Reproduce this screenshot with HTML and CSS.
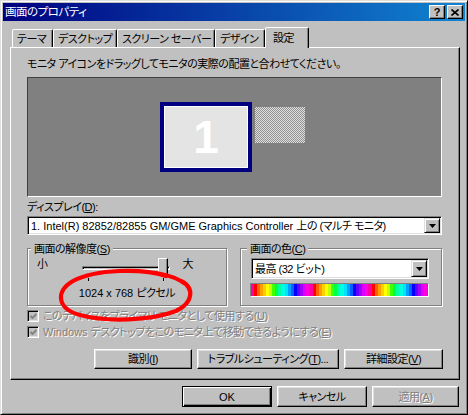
FILE: index.html
```html
<!DOCTYPE html>
<html lang="ja">
<head>
<meta charset="utf-8">
<title>画面のプロパティ</title>
<link rel="stylesheet" href="styles.css">
</head>
<body>
<div class="window">
  <div class="titlebar">
    <span class="title">画面のプロパティ</span>
    <div class="tbtns">
      <span class="tbtn help">?</span>
      <span class="tbtn close"><svg width="8" height="7" viewBox="0 0 8 7"><path d="M0.5 0.5 L7.5 6.5 M7.5 0.5 L0.5 6.5" stroke="#000" stroke-width="1.6" fill="none"/></svg></span>
    </div>
  </div>
  <div class="tabs">
    <span class="tab t1">テーマ</span>
    <span class="tab t2">デスクトップ</span>
    <span class="tab t3">スクリーン セーバー</span>
    <span class="tab t4">デザイン</span>
    <span class="tab t5 active">設定</span>
  </div>
  <div class="panel">
    <p class="desc">モニタ アイコンをドラッグしてモニタの実際の配置と合わせてください。</p>
    <div class="canvas">
      <div class="mon mon1">1</div>
      <div class="mon mon2"></div>
    </div>
    <span class="lbl">ディスプレイ(<u>D</u>):</span>
    <div class="combo wide">
      <span class="val"><span class="en">1. Intel(R) 82852/82855 GM/GME Graphics Controller </span>上の (マルチ モニタ)</span>
      <span class="arrow"><svg width="7" height="4" viewBox="0 0 7 4"><path d="M0 0 H7 L3.5 4 Z" fill="#000"/></svg></span>
    </div>
    <div class="groups">
      <div class="group res">
        <span class="legend">画面の解像度(<u>S</u>)</span>
        <div class="slider-row">
          <span class="small">小</span>
          <div class="slider">
            <span class="track"></span>
            <span class="tick tk1"></span>
            <span class="tick tk2"></span>
            <span class="thumb"></span>
          </div>
          <span class="large">大</span>
        </div>
        <div class="reslabel"><span class="en">1024 x 768 </span>ピクセル</div>
      </div>
      <div class="group color">
        <span class="legend">画面の色(<u>C</u>)</span>
        <div class="combo small-combo">
          <span class="val">最高 (32 ビット)</span>
          <span class="arrow"><svg width="7" height="4" viewBox="0 0 7 4"><path d="M0 0 H7 L3.5 4 Z" fill="#000"/></svg></span>
        </div>
        <div class="colorbar"></div>
      </div>
    </div>
    <div class="check c1">
      <span class="cbox"><svg width="7" height="7" viewBox="0 0 7 7"><path d="M0.5 3 L2.5 5 L6.5 1" stroke="#808080" stroke-width="1.8" fill="none"/></svg></span>
      <span class="dis">このデバイスをプライマリ モニタとして使用する(<u>U</u>)</span>
    </div>
    <div class="check c2">
      <span class="cbox"><svg width="7" height="7" viewBox="0 0 7 7"><path d="M0.5 3 L2.5 5 L6.5 1" stroke="#808080" stroke-width="1.8" fill="none"/></svg></span>
      <span class="dis"><span class="en">Windows </span>デスクトップをこのモニタ上で移動できるようにする(<u>E</u>)</span>
    </div>
    <div class="btnrow">
      <span class="btn b1">識別(<u>I</u>)</span>
      <span class="btn b2">トラブルシューティング(<u>T</u>)...</span>
      <span class="btn b3">詳細設定(<u>V</u>)</span>
    </div>
  </div>
  <div class="footer">
    <span class="btn fb default"><span class="en">OK</span></span>
    <span class="btn fb">キャンセル</span>
    <span class="btn fb apply"><span class="dis">適用(<u>A</u>)</span></span>
  </div>
  <svg class="mark" width="468" height="415" viewBox="0 0 468 415">
    <path d="M166 276 C142 268 96 269 73 281 C55 291 57 309 80 315 C106 322 150 321 176 311 C193 303 195 288 181 281 C172 276 160 273 148 272" stroke="#f00" stroke-width="4.2" fill="none" stroke-linecap="round"/>
  </svg>
</div>
</body>
</html>
```
FILE: styles.css
```css
body {
  margin: 0;
  background: #c0c0c0;
  font-family: "Liberation Sans", "Noto Sans CJK JP", sans-serif;
  font-size: 11px;
  line-height: 14px;
  letter-spacing: -0.5px;
  font-feature-settings: "palt";
  color: #000;
}

.en {
  letter-spacing: 0;
}

.window {
  position: relative;
  width: 468px;
  height: 415px;
  box-sizing: border-box;
  border: 1px solid;
  border-color: #dfdfdf #000 #000 #dfdfdf;
  box-shadow: inset 1px 1px #fff, inset -1px -1px #808080;
  padding: 2px;
  background: #c0c0c0;
}

.titlebar {
  height: 18px;
  display: flex;
  align-items: center;
  justify-content: space-between;
  background: linear-gradient(90deg, #000080, #1084d0);
  color: #fff;
  padding: 0 2px 0 2px;
}

.title {
  line-height: 18px;
  font-size: 11.5px;
}

.tbtns {
  display: flex;
  gap: 2px;
}

.tbtn {
  width: 16px;
  height: 14px;
  box-sizing: border-box;
  background: #c0c0c0;
  border: 1px solid;
  border-color: #fff #000 #000 #fff;
  box-shadow: inset -1px -1px #808080;
  display: flex;
  align-items: center;
  justify-content: center;
  color: #000;
}

.help {
  font: bold 11px/12px "Liberation Sans", sans-serif;
  letter-spacing: 0;
}

.tabs {
  display: flex;
  align-items: flex-end;
  height: 20px;
  margin: 6px 0 0 7px;
  padding-left: 2px;
}

.tab {
  height: 18px;
  box-sizing: border-box;
  border: 1px solid;
  border-bottom: 0;
  border-color: #fff #000 transparent #fff;
  border-radius: 2px 2px 0 0;
  box-shadow: inset -1px 0 #808080;
  padding: 2px 0 0 4px;
  white-space: nowrap;
}

.t1 { width: 41px; }
.t2 { width: 64px; }
.t3 { width: 98px; }
.t4 { width: 50px; }
.t5 { width: 44px; }

.tab.active {
  height: 21px;
  margin-bottom: -1px;
  position: relative;
  z-index: 1;
  background: #c0c0c0;
  padding: 3px 0 0 7px;
}

.panel {
  width: 450px;
  height: 333px;
  margin-left: 7px;
  box-sizing: border-box;
  border: 1px solid;
  border-color: #fff #000 #000 #fff;
  box-shadow: inset -1px -1px #808080;
  padding: 9px 17px 0 16px;
}

.desc {
  margin: 0 0 6px;
  height: 14px;
  white-space: nowrap;
}

.canvas {
  position: relative;
  height: 120px;
  box-sizing: border-box;
  background: #808080;
  border: 1px solid;
  border-color: #404040 #fff #fff #404040;
}

.mon {
  position: absolute;
  box-sizing: border-box;
}

.mon1 {
  left: 132px;
  top: 24px;
  width: 92px;
  height: 70px;
  border: 4px solid #000080;
  box-shadow: inset 0 0 0 1px #fff;
  background: #e4e4e4;
  display: flex;
  align-items: center;
  justify-content: center;
  font: bold 46px/1 "Liberation Sans", sans-serif;
  letter-spacing: 0;
  color: #fff;
}

.mon2 {
  left: 227px;
  top: 29px;
  width: 50px;
  height: 36px;
  background: repeating-conic-gradient(#e0e0e0 0 25%, #909090 0 50%) 0 0 / 2px 2px;
}

.lbl {
  display: block;
  margin-top: 3px;
  height: 14px;
}

.combo {
  display: flex;
  align-items: center;
  box-sizing: border-box;
  background: #fff;
  border: 1px solid;
  border-color: #808080 #fff #fff #808080;
  box-shadow: inset 1px 1px #000, inset -1px -1px #dfdfdf;
  padding: 1px 1px 1px 3px;
}

.combo.wide {
  height: 19px;
  margin-top: 2px;
}

.combo .val {
  flex: 1;
  white-space: nowrap;
  overflow: hidden;
}

.arrow {
  width: 16px;
  height: 100%;
  box-sizing: border-box;
  background: #c0c0c0;
  border: 1px solid;
  border-color: #dfdfdf #000 #000 #dfdfdf;
  box-shadow: inset 1px 1px #fff, inset -1px -1px #808080;
  display: flex;
  align-items: center;
  justify-content: center;
}

.groups {
  display: flex;
  gap: 13px;
  margin-top: 13px;
}

.group {
  height: 58px;
  box-sizing: border-box;
  border: 1px solid #808080;
  box-shadow: inset 1px 1px #fff, 1px 1px #fff;
}

.group.res { width: 200px; }
.group.color { width: 202px; }

.legend {
  display: block;
  width: fit-content;
  margin: -7px 0 0 3px;
  padding: 0 3px;
  background: #c0c0c0;
  height: 14px;
  white-space: nowrap;
}

.color .legend {
  margin-left: 6px;
}

.slider-row {
  display: flex;
  height: 24px;
  padding-top: 1px;
  box-sizing: border-box;
}

.small {
  margin-left: 9px;
}

.slider {
  position: relative;
  width: 88px;
  height: 23px;
  margin-left: 34px;
}

.track {
  position: absolute;
  left: 0;
  right: 0;
  top: 9px;
  height: 4px;
  box-sizing: border-box;
  border: 1px solid;
  border-color: #808080 #fff #fff #808080;
  box-shadow: inset 1px 1px #000;
}

.tick {
  position: absolute;
  top: 21px;
  width: 1px;
  height: 3px;
  background: #000;
}

.tk1 { left: 6px; }
.tk2 { left: 81px; }

.thumb {
  position: absolute;
  left: 76px;
  top: 1px;
  width: 10px;
  height: 17px;
  box-sizing: border-box;
  background: #c0c0c0;
  border: 1px solid;
  border-color: #fff #000 #000 #fff;
  box-shadow: inset -1px -1px #808080;
}

.large {
  margin-left: 13px;
}

.reslabel {
  text-align: center;
  margin-top: 6px;
  height: 14px;
}

.small-combo {
  height: 21px;
  margin: 2px 12px 0 10px;
}

.colorbar {
  height: 14px;
  margin: 4px 12px 0 9px;
  box-sizing: border-box;
  border: 1px solid;
  border-color: #808080 #fff #fff #808080;
  background-image: linear-gradient(90deg,
    #ff0000 0 3px, #ff6000 3px 6px, #ffa000 6px 9px, #ffd000 9px 12px,
    #ffff00 12px 15px, #c0ff00 15px 18px, #40ff00 18px 21px, #00ff40 21px 24px,
    #00ffa0 24px 27px, #00ffe0 27px 31px, #00e0ff 31px 34px, #00a0ff 34px 37px,
    #0060ff 37px 40px, #0000ff 40px 43px, #6000ff 43px 46px, #a000ff 46px 49px,
    #e000ff 49px 52px, #ff00e0 52px 55px, #ff00a0 55px 59px);
  background-size: 59px 100%;
  background-position: 3px 0;
  background-repeat: repeat-x;
}

.check {
  display: flex;
  align-items: center;
  gap: 4px;
  height: 14px;
  white-space: nowrap;
}

.c1 { margin-top: 3px; }
.c2 { margin-top: 2px; }

.cbox {
  width: 12px;
  height: 12px;
  box-sizing: border-box;
  border: 1px solid;
  border-color: #808080 #fff #fff #808080;
  box-shadow: inset 1px 1px #000, inset -1px -1px #dfdfdf;
  background: #c0c0c0;
  display: flex;
  align-items: center;
  justify-content: center;
}

.dis {
  color: #808080;
  text-shadow: 1px 1px 0 #fff;
}

.btnrow {
  display: flex;
  justify-content: flex-end;
  gap: 5px;
  margin-top: 10px;
  margin-right: -1px;
}

.btn {
  box-sizing: border-box;
  border: 1px solid;
  border-color: #fff #000 #000 #fff;
  box-shadow: inset -1px -1px #808080, inset 1px 1px #dfdfdf;
  background: #c0c0c0;
  display: flex;
  align-items: center;
  justify-content: center;
  white-space: nowrap;
  height: 20px;
}

.b1 { width: 98px; }
.b2 { width: 142px; }
.b3 { width: 99px; }

.footer {
  display: flex;
  justify-content: flex-end;
  gap: 5px;
  margin: 6px 6px 0 0;
}

.btn.fb {
  height: 21px;
  width: 90px;
}

.btn.apply {
  width: 87px;
}

.btn.default {
  border-color: #000;
  box-shadow: inset 1px 1px #fff, inset -1px -1px #000, inset -2px -2px #808080;
}

.mark {
  position: absolute;
  left: -1px;
  top: -1px;
  pointer-events: none;
}
```
